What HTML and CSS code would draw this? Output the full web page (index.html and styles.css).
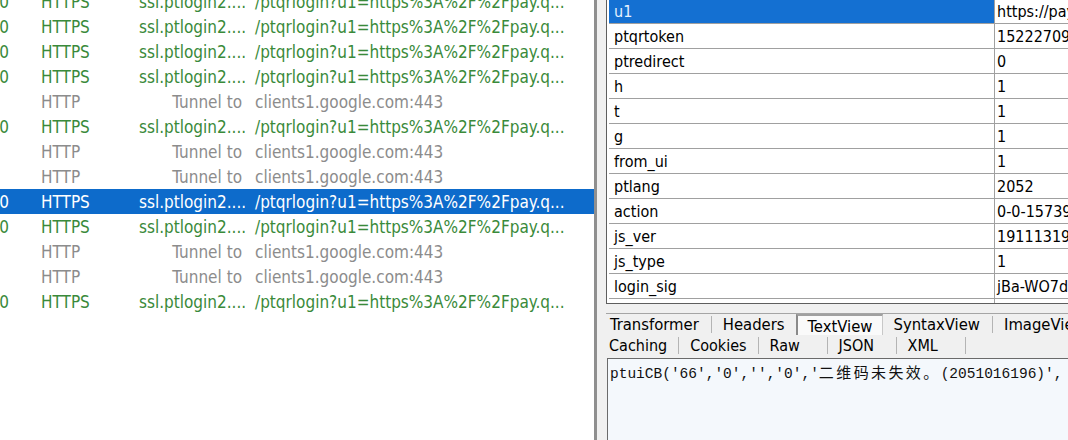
FILE: index.html
```html
<!DOCTYPE html>
<html>
<head>
<meta charset="utf-8">
<link rel="stylesheet" href="styles.css">
</head>
<body>
<div class="sessions">
  <div class="list">
    <div class="row"><span class="result"><span>200</span></span><span>HTTPS</span><span class="host">ssl.ptlogin2....</span><span class="url">/ptqrlogin?u1=https%3A%2F%2Fpay.q...</span></div>
    <div class="row"><span class="result"><span>200</span></span><span>HTTPS</span><span class="host">ssl.ptlogin2....</span><span class="url">/ptqrlogin?u1=https%3A%2F%2Fpay.q...</span></div>
    <div class="row"><span class="result"><span>200</span></span><span>HTTPS</span><span class="host">ssl.ptlogin2....</span><span class="url">/ptqrlogin?u1=https%3A%2F%2Fpay.q...</span></div>
    <div class="row"><span class="result"><span>200</span></span><span>HTTPS</span><span class="host">ssl.ptlogin2....</span><span class="url">/ptqrlogin?u1=https%3A%2F%2Fpay.q...</span></div>
    <div class="row tunnel"><span class="result"></span><span>HTTP</span><span class="host">Tunnel to</span><span class="url">clients1.google.com:443</span></div>
    <div class="row"><span class="result"><span>200</span></span><span>HTTPS</span><span class="host">ssl.ptlogin2....</span><span class="url">/ptqrlogin?u1=https%3A%2F%2Fpay.q...</span></div>
    <div class="row tunnel"><span class="result"></span><span>HTTP</span><span class="host">Tunnel to</span><span class="url">clients1.google.com:443</span></div>
    <div class="row tunnel"><span class="result"></span><span>HTTP</span><span class="host">Tunnel to</span><span class="url">clients1.google.com:443</span></div>
    <div class="row sel"><span class="result"><span>200</span></span><span>HTTPS</span><span class="host">ssl.ptlogin2....</span><span class="url">/ptqrlogin?u1=https%3A%2F%2Fpay.q...</span></div>
    <div class="row"><span class="result"><span>200</span></span><span>HTTPS</span><span class="host">ssl.ptlogin2....</span><span class="url">/ptqrlogin?u1=https%3A%2F%2Fpay.q...</span></div>
    <div class="row tunnel"><span class="result"></span><span>HTTP</span><span class="host">Tunnel to</span><span class="url">clients1.google.com:443</span></div>
    <div class="row tunnel"><span class="result"></span><span>HTTP</span><span class="host">Tunnel to</span><span class="url">clients1.google.com:443</span></div>
    <div class="row"><span class="result"><span>200</span></span><span>HTTPS</span><span class="host">ssl.ptlogin2....</span><span class="url">/ptqrlogin?u1=https%3A%2F%2Fpay.q...</span></div>
  </div>
</div>
<div class="splitter"></div>
<div class="detail">
  <div class="params">
    <div class="prow sel"><span class="pname">u1</span><span class="pval">https://pay.qq.com</span></div>
    <div class="prow"><span class="pname">ptqrtoken</span><span class="pval">1522270945</span></div>
    <div class="prow"><span class="pname">ptredirect</span><span class="pval">0</span></div>
    <div class="prow"><span class="pname">h</span><span class="pval">1</span></div>
    <div class="prow"><span class="pname">t</span><span class="pval">1</span></div>
    <div class="prow"><span class="pname">g</span><span class="pval">1</span></div>
    <div class="prow"><span class="pname">from_ui</span><span class="pval">1</span></div>
    <div class="prow"><span class="pname">ptlang</span><span class="pval">2052</span></div>
    <div class="prow"><span class="pname">action</span><span class="pval">0-0-1573901</span></div>
    <div class="prow"><span class="pname">js_ver</span><span class="pval">19111319</span></div>
    <div class="prow"><span class="pname">js_type</span><span class="pval">1</span></div>
    <div class="prow"><span class="pname">login_sig</span><span class="pval">jBa-WO7dxyz</span></div>
    <div class="prow last"><span class="pname"></span><span class="pval"></span></div>
  </div>
  <div class="tabs">
    <div class="trow top">
      <span class="tab first">Transformer</span>
      <span class="tab">Headers</span>
      <span class="tab sel">TextView</span>
      <span class="tab">SyntaxView</span>
      <span class="tab">ImageView</span>
    </div>
    <div class="trow bottom">
      <span class="tab first">Caching</span>
      <span class="tab">Cookies</span>
      <span class="tab">Raw</span>
      <span class="tab">JSON</span>
      <span class="tab">XML</span>
    </div>
  </div>
  <div class="textbox"><span class="mono">ptuiCB('66','0','','0','</span><span class="cjk">二维码未失效。</span><span class="mono">(2051016196)',</span></div>
</div>
</body>
</html>
```
FILE: styles.css
```css
html, body {
  margin: 0;
  padding: 0;
}
body {
  width: 1068px;
  height: 440px;
  overflow: hidden;
  display: flex;
  font-family: "DejaVu Sans Condensed", "DejaVu Sans", sans-serif;
  font-size: 16px;
  background: #ffffff;
}
.sessions {
  width: 594px;
  flex: none;
  height: 440px;
  overflow: hidden;
  background: #ffffff;
  font-size: 17px;
}
.list {
  margin-top: -11px;
}
.row {
  display: grid;
  grid-template-columns: 41px 98px 106px 1fr;
  height: 25px;
  align-items: center;
  color: #3a8a3a;
  white-space: nowrap;
}
.row.tunnel {
  color: #8c8c8c;
}
.row.sel {
  background: #0d6bcb;
  color: #ffffff;
}
.result {
  display: flex;
  justify-content: flex-end;
  padding-right: 32px;
  min-width: 0;
}
.host {
  overflow: hidden;
}
.tunnel .host {
  text-align: right;
  padding-right: 3px;
}
.url {
  padding-left: 10px;
}
.splitter {
  width: 3px;
  flex: none;
  background: #8f8f8f;
}
.detail {
  flex: 1;
  min-width: 0;
  background: #f0f0f0;
  padding-left: 9px;
  display: flex;
  flex-direction: column;
  overflow: hidden;
}
.params {
  margin-top: -1px;
  height: 304px;
  flex: none;
  border-left: 1px solid #5e5e5e;
  border-bottom: 1px solid #5e5e5e;
  background: #ffffff;
  padding-left: 2px;
  overflow: hidden;
}
.prow {
  display: grid;
  grid-template-columns: 386px 200px;
  height: 24px;
  border-bottom: 1px solid #a0a0a0;
  white-space: nowrap;
}
.prow.last {
  border-bottom: none;
}
.pname,
.pval {
  padding-top: 1px;
  line-height: 23px;
}
.pname {
  padding-left: 5px;
  border-right: 1px solid #a0a0a0;
}
.pval {
  padding-left: 2px;
}
.prow.sel .pname {
  background: #1470d2;
  color: #e6f2ff;
}
.tabs {
  margin-top: 9px;
  border-top: 1px solid #a5a5a5;
  flex: none;
}
.trow {
  display: flex;
  height: 21px;
  align-items: center;
  white-space: nowrap;
}
.tab {
  box-sizing: border-box;
  height: 17px;
  line-height: 17px;
  border-right: 1px solid #b4b4b4;
  color: #000000;
}
.trow.top {
  font-size: 16.5px;
}
.trow.top .tab {
  padding: 0 12px 0 11px;
}
.trow.bottom {
  font-size: 16px;
}
.trow.bottom .tab {
  min-width: 69px;
  padding: 0 11px 0 11px;
}
.trow.top .tab.first {
  padding-left: 4px;
}
.trow.bottom .tab.first {
  padding-left: 3px;
}
.trow.top .tab.sel {
  height: 21px;
  line-height: 21px;
  margin-left: -2px;
  padding-left: 10px;
  padding-right: 9px;
  background: #fafafa;
  border-left: 2px solid #8a8a8a;
  border-top: 2px solid #a0a0a0;
  border-right: 1px solid #c8c8c8;
}
.textbox {
  flex: 1;
  margin-top: 2px;
  margin-left: 1px;
  border-top: 1px solid #6a6a6a;
  border-left: 1px solid #6a6a6a;
  background: #f4f8fc;
  padding: 4px 0 0 2px;
  white-space: nowrap;
  line-height: 18px;
  color: #111111;
}
.mono {
  font-family: "Liberation Mono", monospace;
  font-size: 14.5px;
}
.cjk {
  font-family: "Noto Sans CJK SC", sans-serif;
  font-size: 15px;
  letter-spacing: 2.4px;
}
```
